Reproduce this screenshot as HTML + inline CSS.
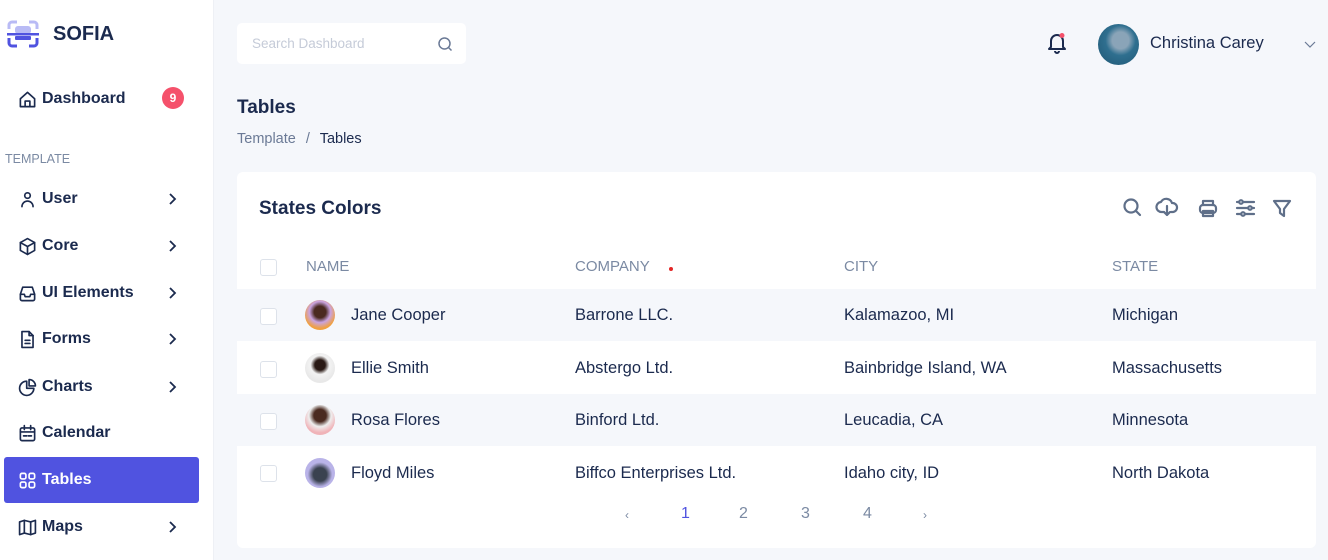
<!DOCTYPE html>
<html><head><style>
*{margin:0;padding:0;box-sizing:border-box}
body{width:1328px;height:560px;overflow:hidden;background:#f5f7fb;font-family:"Liberation Sans",sans-serif;color:#1b2a4e;position:relative}
.sb{position:absolute;left:0;top:0;width:214px;height:560px;background:#fff;border-right:1px solid #eef0f5}
.abs{position:absolute}
.logo{left:7px;top:20px}
.brand{left:53px;top:23px;font-size:20px;font-weight:bold;color:#1b2a4e}
.item{position:absolute;left:4px;width:195px;height:46px;display:flex;align-items:center;padding-left:14px;font-size:16px;font-weight:bold;color:#1b2a4e}
.item svg.i{width:19px;height:19px;margin-right:5px;fill:none;stroke:#1b2a4e;stroke-width:2.1;stroke-linecap:round;stroke-linejoin:round}
.item .ch{position:absolute;left:161px;top:16px;width:14px;height:14px}
.act{background:#5053e0;color:#fff;border-radius:3px}
.act svg.i{stroke:#fff}
.badge{position:absolute;left:162px;top:87px;width:22px;height:22px;border-radius:50%;background:#f5516b;color:#fff;font-size:12px;text-align:center;line-height:22px;font-weight:bold}
.sec{left:5px;top:152px;font-size:12.5px;color:#7b8aa3}
.search{left:237px;top:23px;width:229px;height:41px;background:#fff;border-radius:5px}
.search span{position:absolute;left:15px;top:13px;font-size:13.5px;color:#c5cbd8}
.card{left:237px;top:172px;width:1079px;height:376px;background:#fff;border-radius:6px;overflow:hidden}
.row{position:absolute;left:0;width:1079px;height:52px}
.row.g{background:#f5f7fb}
.cb{position:absolute;left:23px;width:17px;height:17px;border:1px solid #dde2ea;border-radius:3px;background:#fff}
.t{position:absolute;font-size:16.5px;color:#1b2a4e;white-space:nowrap}
.h{position:absolute;font-size:15px;color:#7b8aa3;top:86px}
.av{position:absolute;left:68px;width:30px;height:30px;border-radius:50%}
.pg{position:absolute;top:333px;font-size:16px;color:#7b8aa3}
</style></head><body>
<div class="sb">
<svg class="abs logo" width="32" height="30" viewBox="0 0 32 30"><path d="M2 9V5a3 3 0 0 1 3-3h5M22 2h5a3 3 0 0 1 3 3v4" stroke="#b9bbf5" stroke-width="3" fill="none"/><rect x="8" y="6" width="16" height="8" rx="3" fill="#b9bbf5"/><rect x="0" y="13" width="32" height="2.5" fill="#5053e0"/><rect x="8" y="16" width="16" height="4" rx="1" fill="#5053e0"/><path d="M2 18v5a3 3 0 0 0 3 3h5M22 26h5a3 3 0 0 0 3-3v-5" stroke="#5053e0" stroke-width="3" fill="none"/></svg>
<div class="abs brand">SOFIA</div>
<div class="item" style="top:76px"><svg class="i" viewBox="0 0 24 24"><path d="M3 11l9-8 9 8v10H3z"/><path d="M9 21v-7h6v7"/></svg>Dashboard</div>
<div class="badge">9</div>
<div class="abs sec">TEMPLATE</div>
<div class="item" style="top:176px"><svg class="i" viewBox="0 0 24 24"><circle cx="12" cy="7" r="3.5"/><path d="M5 21a7 7 0 0 1 14 0"/></svg>User<svg class="ch" viewBox="0 0 14 14"><path d="M5 2l5 5-5 5" stroke="#1b2a4e" stroke-width="1.8" fill="none"/></svg></div>
<div class="item" style="top:223px"><svg class="i" viewBox="0 0 24 24"><path d="M12 2l9 5v10l-9 5-9-5V7z"/><path d="M3 7l9 5 9-5M12 12v10"/></svg>Core<svg class="ch" viewBox="0 0 14 14"><path d="M5 2l5 5-5 5" stroke="#1b2a4e" stroke-width="1.8" fill="none"/></svg></div>
<div class="item" style="top:270px"><svg class="i" viewBox="0 0 24 24"><path d="M3 13l3-9h12l3 9v6a2 2 0 0 1-2 2H5a2 2 0 0 1-2-2z"/><path d="M3 13h5l1 3h6l1-3h5"/></svg>UI Elements<svg class="ch" viewBox="0 0 14 14"><path d="M5 2l5 5-5 5" stroke="#1b2a4e" stroke-width="1.8" fill="none"/></svg></div>
<div class="item" style="top:316px"><svg class="i" viewBox="0 0 24 24"><path d="M5 2h9l5 5v15H5z"/><path d="M14 2v5h5M9 13h6M9 17h6"/></svg>Forms<svg class="ch" viewBox="0 0 14 14"><path d="M5 2l5 5-5 5" stroke="#1b2a4e" stroke-width="1.8" fill="none"/></svg></div>
<div class="item" style="top:364px"><svg class="i" viewBox="0 0 24 24"><path d="M11 4a9 9 0 1 0 9 9h-9z"/><path d="M14 2a8 8 0 0 1 8 8h-8z"/></svg>Charts<svg class="ch" viewBox="0 0 14 14"><path d="M5 2l5 5-5 5" stroke="#1b2a4e" stroke-width="1.8" fill="none"/></svg></div>
<div class="item" style="top:410px"><svg class="i" viewBox="0 0 24 24"><rect x="3" y="5" width="18" height="16" rx="2"/><path d="M8 2v5M16 2v5M3 10h18M7 15h4M13 15h4"/></svg>Calendar</div>
<div class="item act" style="top:457px"><svg class="i" viewBox="0 0 24 24"><rect x="3" y="3" width="7" height="7" rx="2"/><rect x="14" y="3" width="7" height="7" rx="2"/><rect x="3" y="14" width="7" height="7" rx="2"/><rect x="14" y="14" width="7" height="7" rx="2"/></svg>Tables</div>
<div class="item" style="top:504px"><svg class="i" viewBox="0 0 24 24"><path d="M2 5l6-2 8 2 6-2v16l-6 2-8-2-6 2z"/><path d="M8 3v16M16 5v16"/></svg>Maps<svg class="ch" viewBox="0 0 14 14"><path d="M5 2l5 5-5 5" stroke="#1b2a4e" stroke-width="1.8" fill="none"/></svg></div>
</div>

<div class="abs search"><span>Search Dashboard</span><svg class="abs" style="left:200px;top:13px" width="16" height="16" viewBox="0 0 16 16"><circle cx="7.5" cy="7.5" r="5.5" stroke="#6b7a96" stroke-width="1.5" fill="none"/><path d="M11.5 11.5l3 3" stroke="#6b7a96" stroke-width="1.5"/></svg></div>
<svg class="abs" style="left:1046px;top:32px" width="22" height="22" viewBox="0 0 22 22"><path d="M5 15V9a6 6 0 0 1 12 0v6l2 2H3z" stroke="#1b2a4e" stroke-width="2" fill="none" stroke-linejoin="round"/><path d="M9 19a2 2 0 0 0 4 0" stroke="#1b2a4e" stroke-width="2" fill="none"/><circle cx="16" cy="3.5" r="2.5" fill="#f5516b"/></svg>
<div class="abs" style="left:1098px;top:24px;width:41px;height:41px;border-radius:50%;background:radial-gradient(circle at 55% 40%,#8aa4b8 0 25%,#2f6f8f 45%,#1f5673 100%)"></div>
<div class="abs" style="left:1150px;top:34px;font-size:16.5px;color:#1b2a4e">Christina Carey</div>
<svg class="abs" style="left:1303px;top:40px" width="14" height="10" viewBox="0 0 14 10"><path d="M2 2l5 5 5-5" stroke="#6b7a96" stroke-width="1.2" fill="none"/></svg>

<div class="abs" style="left:237px;top:97px;font-size:19px;font-weight:bold;color:#1b2a4e">Tables</div>
<div class="abs" style="left:237px;top:131px;font-size:14.5px;color:#6b7a96">Template <span style="margin:0 6px">/</span> <span style="color:#1b2a4e">Tables</span></div>

<div class="abs card">
<div class="t" style="left:22px;top:26px;font-size:19px;font-weight:bold">States Colors</div>
<svg class="abs" style="left:885px;top:25px" width="172" height="22" viewBox="0 0 172 22" fill="none" stroke="#5f6f89" stroke-width="2.2" stroke-linecap="round" stroke-linejoin="round">
<circle cx="9" cy="9" r="6.5"/><path d="M14 14l4 4"/>
<path d="M42 15h-2a5 5 0 0 1-1-10 6 6 0 0 1 11 1 4 4 0 0 1 1 9h-2"/><path d="M45 9v9M42 15l3 3 3-3"/>
<rect x="78" y="8" width="16" height="8" rx="3"/><path d="M81 8V4h10v4M81 14h10v5H81z"/>
<path d="M115 5h17M115 11h17M115 17h17"/><circle cx="119" cy="5" r="1.8" fill="#fff"/><circle cx="128" cy="11" r="1.8" fill="#fff"/><circle cx="121" cy="17" r="1.8" fill="#fff"/>
<path d="M152 4h16l-6 8v7l-4-3v-4z"/>
</svg>
<div class="cb" style="top:87px"></div>
<div class="h" style="left:69px">NAME</div>
<div class="h" style="left:338px">COMPANY</div>
<div class="abs" style="left:432px;top:95px;width:4px;height:4px;border-radius:50%;background:#e32626"></div>
<div class="h" style="left:607px">CITY</div>
<div class="h" style="left:875px">STATE</div>

<div class="row g" style="top:117px"></div>
<div class="row" style="top:170px"></div>
<div class="row g" style="top:222px"></div>
<div class="row" style="top:274px"></div>

<div class="cb" style="top:136px"></div><div class="av" style="top:128px;background:radial-gradient(circle at 50% 40%,#4a2a20 0 25%,#c9a3e0 45%,#f0a040 70%)"></div>
<div class="t" style="left:114px;top:134px">Jane Cooper</div><div class="t" style="left:338px;top:134px">Barrone LLC.</div><div class="t" style="left:607px;top:134px">Kalamazoo, MI</div><div class="t" style="left:875px;top:134px">Michigan</div>

<div class="cb" style="top:189px"></div><div class="av" style="top:181px;background:radial-gradient(circle at 50% 40%,#2a1a15 0 22%,#f3f3f3 40%,#e8e8e8 70%)"></div>
<div class="t" style="left:114px;top:187px">Ellie Smith</div><div class="t" style="left:338px;top:187px">Abstergo Ltd.</div><div class="t" style="left:607px;top:187px">Bainbridge Island, WA</div><div class="t" style="left:875px;top:187px">Massachusetts</div>

<div class="cb" style="top:241px"></div><div class="av" style="top:233px;background:radial-gradient(circle at 50% 35%,#4a2a20 0 25%,#eee 45%,#f0b3b8 70%)"></div>
<div class="t" style="left:114px;top:239px">Rosa Flores</div><div class="t" style="left:338px;top:239px">Binford Ltd.</div><div class="t" style="left:607px;top:239px">Leucadia, CA</div><div class="t" style="left:875px;top:239px">Minnesota</div>

<div class="cb" style="top:293px"></div><div class="av" style="top:286px;background:radial-gradient(circle at 50% 55%,#3a4250 0 30%,#b9b3e8 55%)"></div>
<div class="t" style="left:114px;top:292px">Floyd Miles</div><div class="t" style="left:338px;top:292px">Biffco Enterprises Ltd.</div><div class="t" style="left:607px;top:292px">Idaho city, ID</div><div class="t" style="left:875px;top:292px">North Dakota</div>

<div class="pg" style="left:388px;font-size:12px;top:336px">‹</div>
<div class="pg" style="left:444px;color:#5053e0">1</div>
<div class="pg" style="left:502px">2</div>
<div class="pg" style="left:564px">3</div>
<div class="pg" style="left:626px">4</div>
<div class="pg" style="left:686px;font-size:12px;top:336px">›</div>
</div>
</body></html>
